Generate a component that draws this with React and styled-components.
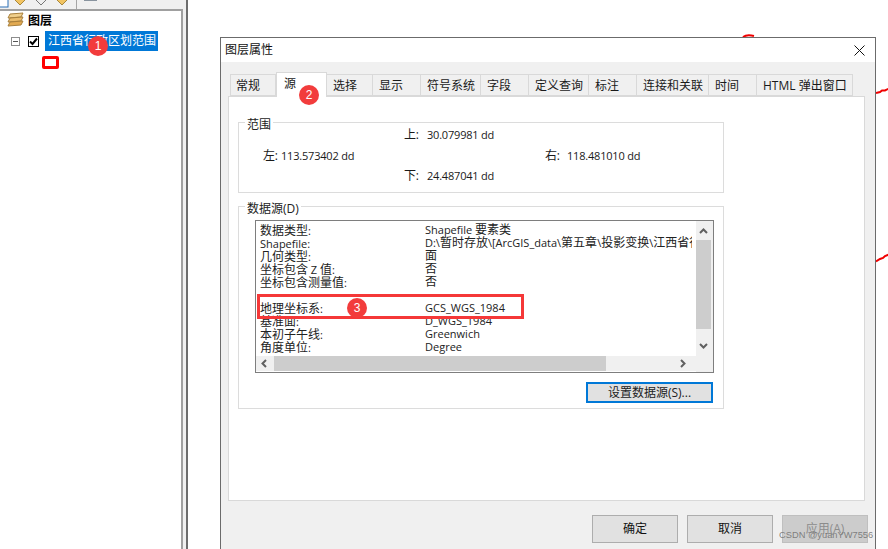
import React from 'react'
import styled, { createGlobalStyle } from 'styled-components'

const FONT = `"Open Sans", "Noto Sans CJK SC", sans-serif`

const tabs = [
  { label: '常规', width: 46 },
  { label: '源', width: 51, active: true },
  { label: '选择', width: 46 },
  { label: '显示', width: 48 },
  { label: '符号系统', width: 60 },
  { label: '字段', width: 48 },
  { label: '定义查询', width: 60 },
  { label: '标注', width: 48 },
  { label: '连接和关联', width: 72 },
  { label: '时间', width: 48 },
  { label: 'HTML 弹出窗口', width: 96 },
]

const sourceRows = [
  ['数据类型:', 'Shapefile 要素类'],
  ['Shapefile:', 'D:\\暂时存放\\[ArcGIS_data\\第五章\\投影变换\\江西省行政区划范围.shp'],
  ['几何类型:', '面'],
  ['坐标包含 Z 值:', '否'],
  ['坐标包含测量值:', '否'],
  ['', ''],
  ['地理坐标系:', 'GCS_WGS_1984'],
  ['基准面:', 'D_WGS_1984'],
  ['本初子午线:', 'Greenwich'],
  ['角度单位:', 'Degree'],
]

// chinese runs are a size bigger than the latin ones in this dialog
const mixed = (text) =>
  text.split(/([\u4e00-\u9fff]+)/).map((part, i) =>
    i % 2 ? <Cjk key={i}>{part}</Cjk> : part
  )

const App = () => {
  return (
    <>
      <GlobalStyle />
      <Page>
        <LeftColumn>
          <Toolbar>
            <ToolIcon width="9" height="14" viewBox="0 0 9 14">
              <rect x="-3" y="1" width="11" height="12" fill="#fff" stroke="#2a6fb5" />
            </ToolIcon>
            <ToolIcon width="14" height="14" viewBox="0 0 14 14" $gap={4}>
              <path d="M1 5 L7 0 L13 5 L7 11 Z" fill="#f2c462" stroke="#a8873c" />
            </ToolIcon>
            <ToolIcon width="14" height="14" viewBox="0 0 14 14" $gap={7}>
              <path d="M1 5 L7 0 L13 5 L7 11 Z" fill="#eee" stroke="#777" />
            </ToolIcon>
            <ToolIcon width="14" height="14" viewBox="0 0 14 14" $gap={7}>
              <path d="M1 5 L7 0 L13 5 L7 11 Z" fill="#f2c462" stroke="#a8873c" />
            </ToolIcon>
            <ToolSeparator />
            <ToolIcon width="13" height="14" viewBox="0 0 13 14" $gap={7}>
              <rect x="0.5" y="-3" width="12" height="9" fill="#fff" stroke="#23384f" />
              <rect x="3" y="1" width="7" height="2" fill="#3b6ea5" />
            </ToolIcon>
          </Toolbar>
          <TreeFrame>
            <TreeView>
              <RootRow>
                <svg width="17" height="16" viewBox="0 0 17 16">
                  <path d="M3 2 L16 1 L14 5 L1 6 Z" fill="#f0cf8c" stroke="#a9803c" />
                  <path d="M3 6 L16 5 L14 9 L1 10 Z" fill="#eabc6c" stroke="#a9803c" />
                  <path d="M3 10 L16 9 L14 13 L1 14 Z" fill="#e2aa52" stroke="#a9803c" />
                </svg>
                <RootLabel>图层</RootLabel>
              </RootRow>
              <LayerRow>
                <Expander />
                <CheckBox>
                  <svg width="9" height="9" viewBox="0 0 9 9">
                    <path d="M1 4.5 L3.5 7 L8 1.5" fill="none" stroke="#000" strokeWidth="2" />
                  </svg>
                </CheckBox>
                <LayerLabel>江西省行政区划范围</LayerLabel>
              </LayerRow>
              <Swatch />
            </TreeView>
            <Splitter />
          </TreeFrame>
        </LeftColumn>

        <MapCanvas>
          <Ink width="14" height="4" viewBox="0 0 14 4" $left={554} $top={34}>
            <path d="M1 3 Q5 0 12 2" />
          </Ink>
          <Ink width="13" height="8" viewBox="0 0 13 8" $left={688} $top={87}>
            <path d="M0 6 L4 5 L6 3.5 L9 3.5 L13 1.5" />
          </Ink>
          <Ink width="13" height="10" viewBox="0 0 13 10" $left={688} $top={253}>
            <path d="M0 8.5 L4 6 L7 5 L9 3 L13 1.5" />
          </Ink>
          <Dialog>
            <TitleBar>
              <TitleText>图层属性</TitleText>
              <svg width="11" height="11" viewBox="0 0 11 11">
                <path d="M0.5 0.5 L10.5 10.5 M10.5 0.5 L0.5 10.5" stroke="#111" fill="none" />
              </svg>
            </TitleBar>
            <DialogBody>
              <TabStrip>
                {tabs.map((t) => (
                  <Tab key={t.label} $width={t.width} $active={t.active}>{t.label}</Tab>
                ))}
              </TabStrip>
              <TabPanel>
                <ExtentGroup>
                  <GroupTitle>范围</GroupTitle>
                  <ExtentGrid>
                    <ExtentCell $col={2} $row={1}><b>上:</b>30.079981 dd</ExtentCell>
                    <ExtentCell $col={1} $row={2}><b>左:</b>113.573402 dd</ExtentCell>
                    <ExtentCell $col={3} $row={2}><b>右:</b>118.481010 dd</ExtentCell>
                    <ExtentCell $col={2} $row={3}><b>下:</b>24.487041 dd</ExtentCell>
                  </ExtentGrid>
                </ExtentGroup>
                <SourceGroup>
                  <GroupTitle>数据源(D)</GroupTitle>
                  <ListBox>
                    <ListContent>
                      {sourceRows.map(([label, value], i) => (
                        <SourceRow key={i}>
                          <span>{mixed(label)}</span>
                          <RowValue>{mixed(value)}</RowValue>
                        </SourceRow>
                      ))}
                    </ListContent>
                    <VerticalBar>
                      <Arrow width="9" height="6" viewBox="0 0 9 6">
                        <path d="M1 5 L4.5 1.5 L8 5" />
                      </Arrow>
                      <VerticalThumb />
                      <Arrow width="9" height="6" viewBox="0 0 9 6">
                        <path d="M1 1 L4.5 4.5 L8 1" />
                      </Arrow>
                    </VerticalBar>
                    <HorizontalBar>
                      <Arrow width="6" height="9" viewBox="0 0 6 9">
                        <path d="M5 1 L1.5 4.5 L5 8" />
                      </Arrow>
                      <HorizontalThumb />
                      <Arrow width="6" height="9" viewBox="0 0 6 9">
                        <path d="M1 1 L4.5 4.5 L1 8" />
                      </Arrow>
                    </HorizontalBar>
                    <Corner />
                  </ListBox>
                  <SourceActions>
                    <SourceButton>设置数据源(S)...</SourceButton>
                  </SourceActions>
                </SourceGroup>
              </TabPanel>
              <Footer>
                <FooterButton>确定</FooterButton>
                <FooterButton>取消</FooterButton>
                <FooterButton $disabled>应用(A)</FooterButton>
              </Footer>
            </DialogBody>
          </Dialog>
        </MapCanvas>

        <Badge $left={88} $top={36}>1</Badge>
        <Badge $left={299} $top={85}>2</Badge>
        <Badge $left={347} $top={298}>3</Badge>
        <Callout />
        <Watermark>CSDN @yuanYW7556</Watermark>
      </Page>
    </>
  )
}

const GlobalStyle = createGlobalStyle`
  html, body {
    margin: 0;
    padding: 0;
    background: #fff;
    overflow: hidden;
  }
  * {
    box-sizing: border-box;
  }
`

const Page = styled.div`
  position: relative;
  display: flex;
  width: 888px;
  height: 549px;
  overflow: hidden;
  font-family: ${FONT};
  font-size: 12px;
  color: #1a1a1a;
`

const Cjk = styled.span`
  font-size: 12px;
`

const LeftColumn = styled.div`
  width: 188px;
  flex: none;
  display: flex;
  flex-direction: column;
  background: #f0f0f0;
  border-right: 2px solid #6d6d6d;
`

const Toolbar = styled.div`
  height: 9px;
  flex: none;
  display: flex;
  align-items: flex-end;
  overflow: hidden;
`

const ToolIcon = styled.svg`
  flex: none;
  margin-left: ${(props) => props.$gap || 0}px;
  margin-top: -6px;
  align-self: flex-start;
`

const ToolSeparator = styled.div`
  width: 1px;
  height: 9px;
  margin-left: 7px;
  background: #a5a5a5;
`

const TreeFrame = styled.div`
  flex: 1;
  display: flex;
`

const TreeView = styled.div`
  width: 183px;
  flex: none;
  padding-top: 1px;
  background: #fff;
  border-top: 2px solid #a0a0a0;
  border-right: 2px solid #a0a0a0;
`

const Splitter = styled.div`
  flex: 1;
  background: #f0f0f0;
`

const RootRow = styled.div`
  display: flex;
  align-items: center;
  gap: 4px;
  height: 16px;
  padding-left: 7px;
`

const RootLabel = styled.span`
  font-weight: 700;
  color: #000;
`

const LayerRow = styled.div`
  display: flex;
  align-items: center;
  height: 20px;
  margin-top: 3px;
  padding-left: 11px;
`

const Expander = styled.div`
  position: relative;
  width: 9px;
  height: 9px;
  background: #fff;
  border: 1px solid #8d8d8d;

  &::after {
    content: '';
    position: absolute;
    left: 1px;
    top: 3px;
    width: 5px;
    height: 1px;
    background: #555;
  }
`

const CheckBox = styled.div`
  display: flex;
  align-items: center;
  justify-content: center;
  width: 11px;
  height: 11px;
  margin-left: 8px;
  border: 1px solid #000;
`

const LayerLabel = styled.div`
  height: 20px;
  margin-left: 6px;
  padding: 0 2px 0 3px;
  line-height: 19px;
  background: #0078d7;
  color: #fff;
  white-space: nowrap;
`

const Swatch = styled.div`
  width: 17px;
  height: 13px;
  margin: 5px 0 0 42px;
  background: #fff;
  border: 3px solid #ff0000;
  border-radius: 2px;
`

const MapCanvas = styled.div`
  position: relative;
  flex: 1;
  background: #fff;
`

const Ink = styled.svg`
  position: absolute;
  left: ${(props) => props.$left}px;
  top: ${(props) => props.$top}px;

  path {
    fill: none;
    stroke: #f00000;
    stroke-width: 2;
  }
`

const Dialog = styled.div`
  position: absolute;
  left: 32px;
  top: 37px;
  width: 656px;
  height: 520px;
  display: flex;
  flex-direction: column;
  background: #f0f0f0;
  border: 1px solid #6b6b6b;
`

const TitleBar = styled.div`
  height: 24px;
  flex: none;
  display: flex;
  align-items: center;
  justify-content: space-between;
  padding: 0 10px 0 4px;
  background: #fff;
`

const TitleText = styled.span`
  margin-top: -3px;
  color: #111;
`

const DialogBody = styled.div`
  flex: 1;
  padding: 10px 10px 0 7px;
`

const TabStrip = styled.div`
  display: flex;
  align-items: flex-end;
  height: 24px;
  padding-left: 2px;
`

const Tab = styled.div`
  position: relative;
  width: ${(props) => props.$width}px;
  height: ${(props) => (props.$active ? 25 : 22)}px;
  flex: none;
  margin-bottom: ${(props) => (props.$active ? -1 : 0)}px;
  padding: ${(props) => (props.$active ? '1px 0 0 7px' : '1px 0 0 6px')};
  line-height: 20px;
  white-space: nowrap;
  background: ${(props) => (props.$active ? '#fff' : '#f0f0f0')};
  border: 1px solid #d9d9d9;
  border-left-width: ${(props) => (props.$active ? 1 : 0)}px;
  border-bottom-width: ${(props) => (props.$active ? 0 : 1)}px;
  z-index: ${(props) => (props.$active ? 1 : 0)};

  &:first-child {
    border-left-width: 1px;
    padding-left: 5px;
  }
`

const TabPanel = styled.div`
  height: 405px;
  padding: 25px 0 0 9px;
  background: #fff;
  border: 1px solid #d9d9d9;
`

const ExtentGroup = styled.div`
  width: 486px;
  height: 71px;
  border: 1px solid #dcdcdc;
`

const GroupTitle = styled.div`
  width: fit-content;
  height: 16px;
  margin: -6px 0 0 6px;
  padding: 0 2px;
  line-height: 16px;
  background: #fff;
  color: #222;
`

const ExtentGrid = styled.div`
  display: grid;
  grid-template-columns: 141px 141px 1fr;
  grid-template-rows: 21px 20px 20px;
  margin-top: -8px;
  padding-left: 24px;
`

const ExtentCell = styled.div`
  grid-column: ${(props) => props.$col};
  grid-row: ${(props) => props.$row};
  font-size: 11px;
  letter-spacing: -0.2px;
  line-height: 20px;
  white-space: nowrap;

  b {
    display: inline-block;
    width: ${(props) => ({ 1: 18, 2: 23, 3: 22 })[props.$col]}px;
    font-size: 12px;
    font-weight: 400;
  }
`

const SourceGroup = styled.div`
  width: 486px;
  height: 203px;
  margin-top: 13px;
  border: 1px solid #dcdcdc;
`

const ListBox = styled.div`
  display: grid;
  grid-template-columns: 440px 17px;
  grid-template-rows: 135px 16px;
  width: 459px;
  height: 153px;
  margin: 3px 0 0 16px;
  border: 1px solid #7e7e7e;
  background: #fff;
`

const ListContent = styled.div`
  padding: 3px 4px 0 4px;
`

const SourceRow = styled.div`
  display: grid;
  grid-template-columns: 165px 1fr;
  height: 13px;
  font-size: 11px;
  line-height: 13px;
  white-space: nowrap;
  color: #222;
`

const RowValue = styled.span`
  min-width: 0;
  margin-top: -1px;
  overflow-x: clip;
`

const VerticalBar = styled.div`
  display: flex;
  flex-direction: column;
  align-items: center;
  padding: 7px 2px 7px 0;
  background: #f0f0f0;
`

const VerticalThumb = styled.div`
  width: 15px;
  height: 90px;
  margin: 6px 0 14px;
  background: #cdcdcd;
`

const HorizontalBar = styled.div`
  display: flex;
  align-items: center;
  height: 15px;
  padding: 0 7px 0 5px;
  background: #f0f0f0;
`

const HorizontalThumb = styled.div`
  width: 332px;
  height: 15px;
  margin: 0 74px 0 7px;
  background: #cdcdcd;
`

const Corner = styled.div`
  background: #f0f0f0;
`

const Arrow = styled.svg`
  flex: none;

  path {
    fill: none;
    stroke: #606060;
    stroke-width: 2;
  }
`

const SourceActions = styled.div`
  display: flex;
  justify-content: flex-end;
  margin-top: 9px;
  padding-right: 10px;
`

const SourceButton = styled.div`
  width: 127px;
  height: 21px;
  line-height: 17px;
  text-align: center;
  background: #e1e1e1;
  border: 2px solid #0078d7;
  color: #222;
`

const Footer = styled.div`
  display: flex;
  justify-content: flex-end;
  gap: 9px;
  margin-top: 14px;
  margin-right: -3px;
`

const FooterButton = styled.div`
  width: 86px;
  height: 28px;
  line-height: 26px;
  text-align: center;
  background: ${(props) => (props.$disabled ? '#cccccc' : '#e1e1e1')};
  border: 1px solid ${(props) => (props.$disabled ? '#bfbfbf' : '#adadad')};
  color: ${(props) => (props.$disabled ? '#8c8c8c' : '#111')};
`

const Badge = styled.div`
  position: absolute;
  z-index: 5;
  left: ${(props) => props.$left}px;
  top: ${(props) => props.$top}px;
  width: 20px;
  height: 20px;
  border-radius: 50%;
  background: #f23c3c;
  color: #fff;
  font-family: "Liberation Sans", sans-serif;
  font-size: 12px;
  line-height: 20px;
  text-align: center;
`

const Callout = styled.div`
  position: absolute;
  z-index: 4;
  left: 257px;
  top: 294px;
  width: 267px;
  height: 25px;
  border: 3px solid #f53838;
`

const Watermark = styled.div`
  position: absolute;
  z-index: 5;
  left: 779px;
  top: 528px;
  font-family: "Liberation Sans", sans-serif;
  font-size: 9.3px;
  line-height: 14px;
  white-space: nowrap;
  color: rgba(110, 110, 110, 0.85);
`

export default App
